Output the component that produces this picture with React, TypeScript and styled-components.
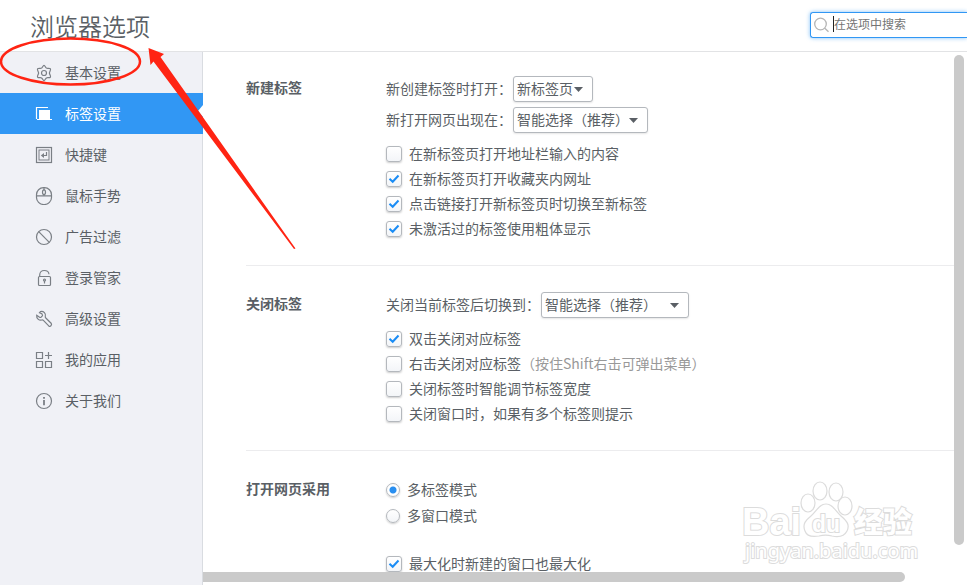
import React from "react";
import styled, { createGlobalStyle, css } from "styled-components";

const color = {
  text: "#5a5f65",
  muted: "#999999",
  blue: "#3197f4",
  check: "#1a8cf5",
  border: "#b4b8bd",
  line: "#ececee",
  side: "#f0f1f6",
  thumb: "#cacaca",
  mark: "#ff2413",
};

const GlobalStyle = createGlobalStyle`
  *, *::before, *::after { box-sizing: border-box; }
  body {
    margin: 0;
    background: #ffffff;
    color: ${color.text};
    font: 14px/20px "Noto Sans CJK SC", "Noto Sans", sans-serif;
  }
  input, select, button { font: inherit; color: inherit; }
`;

const Page = styled.div`
  position: relative;
  display: flex;
  flex-direction: column;
  height: 100vh;
  overflow: hidden;
`;

const Header = styled.header`
  display: flex;
  align-items: flex-start;
  justify-content: space-between;
  flex: none;
  height: 52px;
  padding-left: 30px;
  border-bottom: 1px solid #e2e3e5;
`;

const Title = styled.h1`
  margin: 0;
  font-size: 24px;
  line-height: 52px;
  font-weight: 350;
`;

const SearchBox = styled.label`
  position: relative;
  display: flex;
  align-items: center;
  gap: 5px;
  width: 157px;
  height: 26px;
  margin-top: 12px;
  padding-left: 3px;
  border: 1px solid ${color.blue};
  border-right: 0;
  border-radius: 3px 0 0 3px;
  box-shadow: 0 0 4px rgba(49, 151, 244, 0.6);
`;

const SearchInput = styled.input`
  flex: 1;
  min-width: 0;
  padding: 0 0 2px;
  border: 0;
  outline: 0;
  background: transparent;
  font-size: 12px;
  line-height: 20px;
  &::placeholder { color: #757575; opacity: 1; }
`;

const Caret = styled.span`
  position: absolute;
  left: 22px;
  top: 3px;
  width: 1px;
  height: 16px;
  background: #222222;
`;

const Body = styled.div`
  display: flex;
  flex: 1;
  min-height: 0;
`;

const Sidebar = styled.nav`
  flex: none;
  width: 203px;
  background: ${color.side};
  box-shadow: inset -1px 0 0 #d9dce1;
`;

const NavItem = styled.a<{ $active?: boolean }>`
  position: relative;
  display: flex;
  align-items: center;
  gap: 12px;
  height: 41px;
  padding-left: 35px;
  overflow: hidden;
  color: ${color.text};
  text-decoration: none;
  svg { color: #7a7f85; }
  ${(p) =>
    p.$active &&
    css`
      background: ${color.blue};
      color: #ffffff;
      svg { color: #ffffff; }
      &::after {
        content: "";
        position: absolute;
        right: 0;
        top: 12px;
        border: 6px solid transparent;
        border-left: 0;
        border-right: 5px solid #ffffff;
      }
    `}
`;

const Caption = styled.span`
  padding-bottom: 2px;
`;

const Viewport = styled.div`
  display: grid;
  flex: 1;
  min-width: 0;
  grid-template-columns: minmax(0, 1fr) 13px;
  grid-template-rows: minmax(0, 1fr) 13px;
`;

const Content = styled.main`
  padding-left: 43px;
  overflow: hidden;
`;

const TrackY = styled.div`
  padding: 3px 3px 27px 0;
`;

const TrackX = styled.div`
  padding: 0 49px 3px 0;
`;

const Thumb = styled.div<{ $flat?: boolean }>`
  height: 100%;
  border-radius: ${(p) => (p.$flat ? "0 5px 5px 0" : "5px")};
  background: ${color.thumb};
`;

const Section = styled.section`
  display: grid;
  grid-template-columns: 140px minmax(0, 1fr);
  padding: 24px 0;
  white-space: nowrap;
  & + & {
    padding-top: 26px;
    border-top: 1px solid ${color.line};
  }
`;

const SectionTitle = styled.h2`
  margin: 0;
  font-size: 14px;
  line-height: 23px;
  font-weight: 700;
`;

const Fields = styled.div`
  display: flex;
  flex-direction: column;
  gap: 5px;
`;

const Field = styled.label`
  display: flex;
  align-items: center;
  height: 26px;
  gap: 1px;
`;

const SelectWrap = styled.span<{ $width: number }>`
  position: relative;
  display: block;
  width: ${(p) => p.$width}px;
  svg {
    position: absolute;
    right: 10px;
    top: 11px;
    pointer-events: none;
  }
`;

const Select = styled.select`
  display: block;
  appearance: none;
  width: 100%;
  height: 26px;
  padding: 0 0 2px 3px;
  border: 1px solid ${color.border};
  border-radius: 3px;
  background: #ffffff;
  box-shadow: 0 1px 2px rgba(0, 0, 0, 0.1);
  line-height: 22px;
`;

const Options = styled.div<{ $gap: number }>`
  display: flex;
  flex-direction: column;
  margin-top: ${(p) => p.$gap}px;
`;

const Option = styled.label<{ $height: number }>`
  display: flex;
  align-items: center;
  gap: 7px;
  height: ${(p) => p.$height}px;
`;

const Hint = styled.span`
  color: ${color.muted};
`;

const Mark = styled.span`
  position: relative;
  display: flex;
  svg {
    position: absolute;
    left: 0;
    top: 0;
    pointer-events: none;
  }
`;

const boxLook = css`
  appearance: none;
  margin: 0;
  border: 1px solid ${color.border};
  background: linear-gradient(#ffffff, #f3f5f8);
  box-shadow: 0 1px 2px rgba(0, 0, 0, 0.2);
`;

const CheckInput = styled.input`
  ${boxLook}
  width: 16px;
  height: 16px;
  border-radius: 3px;
  & + svg { display: none; }
  &:checked + svg { display: block; }
`;

const RadioInput = styled.input`
  ${boxLook}
  width: 14px;
  height: 14px;
  border-radius: 50%;
  &:checked {
    background: radial-gradient(circle, #2a8ff0 0 2px, #2a8ff0 3px, #ffffff 4px);
  }
`;

const Overlay = styled.svg`
  position: absolute;
  left: 0;
  top: 0;
  pointer-events: none;
`;

const Watermark = styled.svg`
  position: absolute;
  right: 48px;
  bottom: 16px;
  pointer-events: none;
`;

function Icon({ children }: { children: React.ReactNode }) {
  return (
    <svg width="18" height="18" viewBox="0 0 18 18" fill="none" stroke="currentColor" strokeWidth="1.2" aria-hidden="true">
      {children}
    </svg>
  );
}

const icons = {
  gear: (
    <Icon>
      <path d="M9 1.4C10 1.4 10.4 3.4 11.4 4.1C12.4 4.7 14.5 3.8 15.3 4.7C16.3 6.1 14.4 7.5 14.4 9S16.3 11.9 15.3 13.3C14.5 14.2 12.4 13.3 11.4 13.9C10.4 14.6 10 16.6 9 16.6S7.6 14.6 6.6 13.9C5.6 13.3 3.5 14.2 2.7 13.3C1.7 11.9 3.6 10.5 3.6 9S1.7 6.1 2.7 4.7C3.5 3.8 5.6 4.7 6.6 4.1C7.6 3.4 8 1.4 9 1.4Z" />
      <circle cx="9" cy="9" r="2.5" />
    </Icon>
  ),
  tabs: (
    <Icon>
      <path d="M1.5 14V2.5H13" />
      <path d="M4 5H15V14H17V15H2V14H4Z" fill="currentColor" stroke="none" />
    </Icon>
  ),
  keys: (
    <Icon>
      <rect x="1.5" y="1.5" width="15" height="15" />
      <rect x="4" y="4" width="10" height="10" strokeWidth="1" />
      <path d="M11.5 6V9.5H7" />
      <path d="M9 7L5.8 9.5L9 12Z" fill="currentColor" stroke="none" />
    </Icon>
  ),
  mouse: (
    <Icon>
      <rect x="1.5" y="0.7" width="15" height="16.8" rx="7" />
      <path d="M1.5 8.8H16.5M9 0.7V3M9 7.5V8.8" />
      <ellipse cx="9" cy="5.2" rx="1.5" ry="2.3" />
    </Icon>
  ),
  ban: (
    <Icon>
      <circle cx="9" cy="9" r="7.5" />
      <path d="M3.7 3.7L14.3 14.3" />
    </Icon>
  ),
  lock: (
    <Icon>
      <rect x="3.5" y="7.5" width="12" height="9" rx="1" />
      <path d="M4.7 7.5V6C4.7 3 6.7 1.5 9.2 1.5C11.8 1.5 13.8 3 14 5.3" />
      <circle cx="9.5" cy="11" r="1" />
      <path d="M9.5 12V14.5" />
    </Icon>
  ),
  wrench: (
    <Icon>
      <path d="M5.5 1.6C8.6 0.9 11.2 3.5 10.3 6.6C10.2 7.2 10.4 7.6 10.8 8L16.1 13.2C17.3 14.6 15.6 17.2 13.7 15.9L8.4 10.4C8 10 7.5 9.9 6.9 10C4 10.7 1.3 8.4 1.7 5.3L4.6 7.3C5.1 7.6 5.6 7.5 6 7.2L7.3 5.9C7.6 5.5 7.6 5 7.3 4.6L6.8 3.8L4.5 2.7Z" />
    </Icon>
  ),
  apps: (
    <Icon>
      <path d="M1.5 1.5H7.5V7.5H1.5ZM1.5 10.5H7.5V16.5H1.5ZM10.5 10.5H16.5V16.5H10.5ZM13.5 1V8M10 4.5H17" />
    </Icon>
  ),
  info: (
    <Icon>
      <circle cx="9" cy="9" r="7.5" />
      <path d="M9 8V13.3M9 5V6.7" strokeWidth="1.8" />
    </Icon>
  ),
};

const navItems: { label: string; icon: keyof typeof icons; active?: boolean }[] = [
  { label: "基本设置", icon: "gear" },
  { label: "标签设置", icon: "tabs", active: true },
  { label: "快捷键", icon: "keys" },
  { label: "鼠标手势", icon: "mouse" },
  { label: "广告过滤", icon: "ban" },
  { label: "登录管家", icon: "lock" },
  { label: "高级设置", icon: "wrench" },
  { label: "我的应用", icon: "apps" },
  { label: "关于我们", icon: "info" },
];

function SelectField({ label, value, width }: { label: string; value: string; width: number }) {
  return (
    <Field>
      <Caption>{label}</Caption>
      <SelectWrap $width={width}>
        <Select defaultValue={value}>
          <option>{value}</option>
        </Select>
        <svg width="9" height="5" viewBox="0 0 9 5" fill={color.text} aria-hidden="true">
          <path d="M0 0H9L4.5 5Z" />
        </svg>
      </SelectWrap>
    </Field>
  );
}

function Check({ label, hint, checked }: { label: string; hint?: string; checked?: boolean }) {
  return (
    <Option $height={25}>
      <Mark>
        <CheckInput type="checkbox" defaultChecked={checked} />
        <svg width="16" height="16" viewBox="0 0 16 16" fill="none" stroke={color.check} strokeWidth="2" aria-hidden="true">
          <path d="M3.5 7.8L6.7 10.8L12.5 4.5" />
        </svg>
      </Mark>
      <Caption>
        {label}
        {hint && <Hint>{hint}</Hint>}
      </Caption>
    </Option>
  );
}

function Radio({ label, checked }: { label: string; checked?: boolean }) {
  return (
    <Option $height={26}>
      <RadioInput type="radio" name="open-mode" defaultChecked={checked} />
      <Caption>{label}</Caption>
    </Option>
  );
}

export default function App() {
  return (
    <Page>
      <GlobalStyle />
      <Header>
        <Title>浏览器选项</Title>
        <SearchBox>
          <svg width="15" height="16" viewBox="0 0 15 16" fill="none" stroke="#b5b5b5" strokeWidth="1.3" aria-hidden="true">
            <circle cx="6.5" cy="7" r="5.8" />
            <path d="M10.8 11.2L14.5 14.8" />
          </svg>
          <SearchInput type="text" placeholder="在选项中搜索" aria-label="在选项中搜索" />
          <Caret />
        </SearchBox>
      </Header>

      <Body>
        <Sidebar>
          {navItems.map((item) => (
            <NavItem key={item.label} href="#" $active={item.active}>
              {icons[item.icon]}
              <Caption>{item.label}</Caption>
            </NavItem>
          ))}
        </Sidebar>

        <Viewport>
          <Content>
            <Section>
              <SectionTitle>新建标签</SectionTitle>
              <div>
                <Fields>
                  <SelectField label="新创建标签时打开：" value="新标签页" width={80} />
                  <SelectField label="新打开网页出现在：" value="智能选择（推荐）" width={135} />
                </Fields>
                <Options $gap={8}>
                  <Check label="在新标签页打开地址栏输入的内容" />
                  <Check label="在新标签页打开收藏夹内网址" checked />
                  <Check label="点击链接打开新标签页时切换至新标签" checked />
                  <Check label="未激活过的标签使用粗体显示" checked />
                </Options>
              </div>
            </Section>

            <Section>
              <SectionTitle>关闭标签</SectionTitle>
              <div>
                <Fields>
                  <SelectField label="关闭当前标签后切换到：" value="智能选择（推荐）" width={148} />
                </Fields>
                <Options $gap={8}>
                  <Check label="双击关闭对应标签" checked />
                  <Check label="右击关闭对应标签" hint="（按住Shift右击可弹出菜单）" />
                  <Check label="关闭标签时智能调节标签宽度" />
                  <Check label="关闭窗口时，如果有多个标签则提示" />
                </Options>
              </div>
            </Section>

            <Section>
              <SectionTitle>打开网页采用</SectionTitle>
              <div>
                <Options $gap={0}>
                  <Radio label="多标签模式" checked />
                  <Radio label="多窗口模式" />
                </Options>
                <Options $gap={22}>
                  <Check label="最大化时新建的窗口也最大化" checked />
                </Options>
              </div>
            </Section>
          </Content>
          <TrackY>
            <Thumb />
          </TrackY>
          <TrackX>
            <Thumb $flat />
          </TrackX>
        </Viewport>
      </Body>

      <Watermark width="180" height="90" viewBox="0 15 180 90" fill="#ffffff" stroke="#dcdcdc" strokeWidth="1.2" aria-hidden="true">
        <ellipse cx="69" cy="39" rx="7" ry="9" />
        <ellipse cx="81" cy="27" rx="7" ry="9" />
        <ellipse cx="97" cy="28" rx="7" ry="9" />
        <ellipse cx="106" cy="42" rx="7" ry="9" />
        <path d="M87 40C94 40 96 47 102 52C108 57 111 61 108 67C105 73 98 73 93 72C89 71 84 71 80 72C74 73 68 73 66 67C63 60 67 56 72 52C78 47 80 40 87 40Z" />
        <g fontFamily="Liberation Sans, sans-serif" fontWeight="700" paintOrder="stroke" strokeWidth="2">
          <text x="3" y="71" fontSize="38">Bai</text>
          <text x="73" y="68" fontSize="23">du</text>
          <text x="115" y="69" fontSize="29" fontFamily="Noto Sans CJK SC, sans-serif" fontWeight="900">经验</text>
        </g>
        <text x="6" y="94" fontSize="20" fontFamily="Noto Sans, sans-serif" fontWeight="400" paintOrder="stroke" strokeWidth="2">jingyan.baidu.com</text>
      </Watermark>

      <Overlay width="300" height="255" viewBox="0 0 300 255" aria-hidden="true">
        <ellipse cx="70.5" cy="61.5" rx="69.5" ry="23" fill="none" stroke={color.mark} strokeWidth="2.5" />
        <path d="M148.5 48L164 54L160.5 57L295.5 248.5L294 249L153.5 61.5L150.5 65Z" fill={color.mark} />
      </Overlay>
    </Page>
  );
}
